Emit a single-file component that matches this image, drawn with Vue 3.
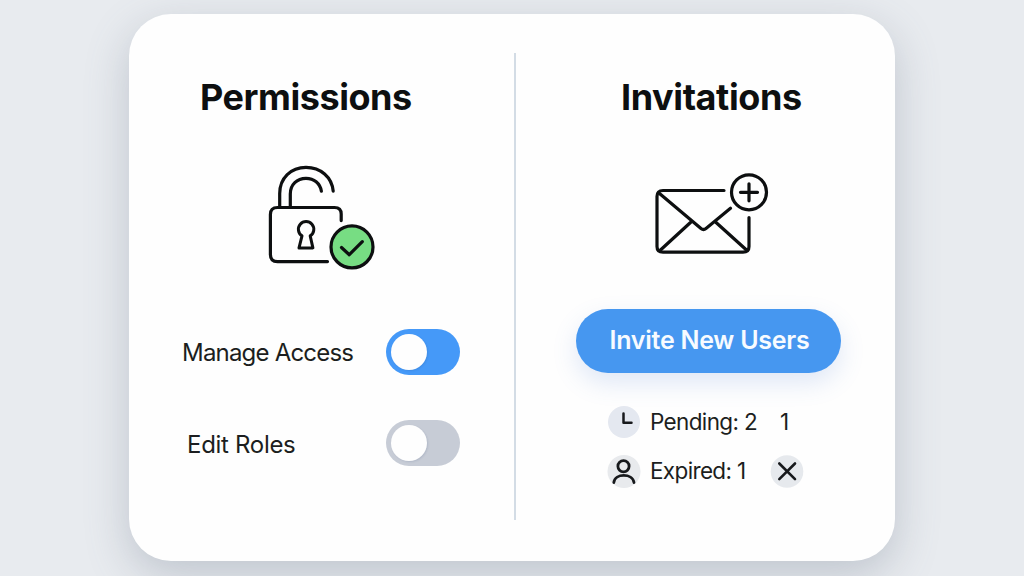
<script setup>
const settings = [
  { label: 'Manage Access', on: true },
  { label: 'Edit Roles', on: false },
]
</script>

<template>
  <main class="page">
    <div class="card">
      <section class="panel permissions">
        <h1 class="title">Permissions</h1>
        <svg class="lock" width="120" height="116" viewBox="260 160 120 116" fill="none" stroke="#0d0f10" stroke-width="3.2" stroke-linecap="round" stroke-linejoin="round">
          <path d="M279.7 206V193.5C279.7 178 291 167.3 306 167.3C320.5 167.3 332 177 333.2 191.2" />
          <path d="M290.3 206V194C290.3 184.5 297 178.4 306 178.4C314 178.4 320 183.3 321.4 191.2" />
          <path d="M341.2 220.600V214Q341.200 207.500 334.500 207.500H277.500Q270.400 207.500 270.400 214.500V254.500Q270.400 261.600 277.500 261.600H327.500" />
          <path d="M302 235.800A7.700 7.700 0 1 1 310.200 235.800L312.900 247.900H299Z" stroke-width="3" />
          <circle cx="352" cy="246.900" r="21" fill="#77dd83" />
          <path d="M341.500 247.500L349.300 254.700L362.300 241.700" />
        </svg>
        <div class="settings">
          <div v-for="s in settings" :key="s.label" class="setting">
            <span class="label" :class="{ inset: !s.on }">{{ s.label }}</span>
            <span class="toggle" :class="{ on: s.on }"><span class="knob"></span></span>
          </div>
        </div>
      </section>
      <div class="divider"></div>
      <section class="panel invitations">
        <h1 class="title">Invitations</h1>
        <svg class="mail" width="120" height="90" viewBox="652 170 120 90" fill="none" stroke="#0d0f10" stroke-width="3.2" stroke-linecap="round" stroke-linejoin="round">
          <path d="M724 190.500H663Q657 190.500 657 196.500V246.500Q657 252.200 663 252.200H743Q749 252.200 749 246.500V217.500" />
          <path d="M659.500 193.500L701 228.500Q703.500 230.500 706 228.500L730.500 208.300M660.500 250L691 222M715.500 222L746.500 250" />
          <circle cx="749" cy="192.300" r="17.500" />
          <path d="M740.500 192.300H757.500M749 183.800V200.800" />
        </svg>
        <button class="invite">Invite New Users</button>
        <div class="stats">
          <div class="stat">
            <svg width="34" height="34" viewBox="0 0 34 34" fill="none" stroke="#17191c" stroke-width="2.5" stroke-linecap="round" stroke-linejoin="round">
              <circle cx="17" cy="16" r="16" fill="#e4e8f0" stroke="none" />
              <path d="M16.500 7.500V16.800H24.500" />
            </svg>
            <span class="stat-text pending">Pending: 2</span>
            <span class="stat-text extra">1</span>
          </div>
          <div class="stat">
            <svg width="34" height="34" viewBox="0 0 34 34" fill="none" stroke="#17191c" stroke-width="2.8" stroke-linecap="round">
              <circle cx="17" cy="16.500" r="16.500" fill="#e8eaed" stroke="none" />
              <circle cx="16.500" cy="11.200" r="5.600" />
              <path d="M6.800 27.500C8 18 25.500 18 27 27.500" />
            </svg>
            <span class="stat-text expired">Expired: 1</span>
            <svg class="close" width="34" height="34" viewBox="0 0 34 34" fill="none" stroke="#17191c" stroke-width="2.6" stroke-linecap="round">
              <circle cx="17" cy="16.500" r="16.300" fill="#e6e9ed" stroke="none" />
              <path d="M9.300 8.500L25 24.200M25 8.500L9.300 24.200" />
            </svg>
          </div>
        </div>
      </section>
    </div>
  </main>
</template>

<style>
body {
  margin: 0;
}
</style>

<style scoped>
.page {
  box-sizing: border-box;
  width: 1024px;
  height: 576px;
  padding: 14px 129px 15px;
  overflow: hidden;
  background: #e8ebef;
  font-family: Inter, "Liberation Sans", sans-serif;
  color: #0d0f10;
}
.card {
  display: grid;
  grid-template-columns: 385px 2px 379px;
  height: 547px;
  border-radius: 42px;
  background: #fefefe;
  box-shadow: 0 14px 44px rgba(95, 108, 130, 0.3);
}
.divider {
  margin: 39px 0 41px;
  background: #d3dce5;
}
.panel {
  display: flex;
  flex-direction: column;
  align-items: flex-start;
}
.title {
  margin: 61px 0 0 71px;
  font-size: 36px;
  line-height: 44px;
  font-weight: 700;
  letter-spacing: -0.45px;
  white-space: nowrap;
}
.invitations .title {
  margin-left: 105px;
  letter-spacing: -0.4px;
}
.lock {
  margin: 41px 0 0 131px;
}
.settings {
  display: flex;
  flex-direction: column;
  gap: 45px;
  width: 278px;
  margin: 53px 0 0 53px;
}
.setting {
  display: flex;
  align-items: center;
  justify-content: space-between;
}
.label {
  font-size: 24px;
  letter-spacing: -0.8px;
  color: #1c1e20;
  white-space: nowrap;
}
.label.inset {
  margin: 2px 0 0 5px;
  letter-spacing: -0.3px;
}
.toggle {
  box-sizing: border-box;
  width: 74px;
  height: 46px;
  padding: 5px;
  border-radius: 23px;
  background: #c7ccd6;
}
.toggle.on {
  background: #4599f8;
}
.knob {
  display: block;
  width: 36px;
  height: 36px;
  border-radius: 50%;
  background: #fefefe;
  box-shadow: 1px 1px 2px rgba(30, 60, 110, 0.12);
}
.mail {
  margin: 51px 0 0 136px;
}
.invite {
  width: 265px;
  height: 64px;
  margin: 49px 0 0 60px;
  padding: 0 0 2px 2px;
  border: 0;
  border-radius: 32px;
  background: #4697f0;
  box-shadow: 0 10px 24px rgba(85, 130, 210, 0.18);
  color: #f7fbff;
  font: 600 25px Inter, "Liberation Sans", sans-serif;
  letter-spacing: -0.25px;
  white-space: nowrap;
}
.stats {
  display: flex;
  flex-direction: column;
  gap: 15px;
  margin: 33px 0 0 91px;
}
.stat {
  display: flex;
  align-items: center;
  height: 34px;
}
.stat-text {
  margin: -3px 0 0 9px;
  font-size: 22.5px;
  letter-spacing: -0.65px;
  color: #1c1e20;
  white-space: nowrap;
}
.pending,
.expired {
  width: 110px;
}
.stat-text.extra {
  margin-left: 20px;
}
.close {
  margin-left: 10px;
}
</style>
